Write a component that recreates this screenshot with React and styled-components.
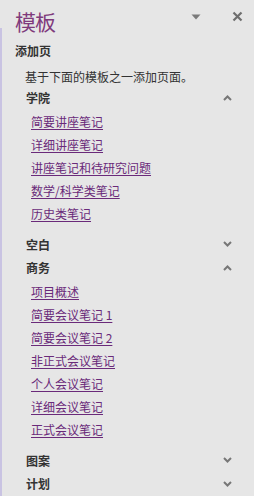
import React from 'react';
import styled, { createGlobalStyle } from 'styled-components';

const GlobalStyle = createGlobalStyle`
  html, body {
    margin: 0;
    padding: 0;
    background: #e6e6e6;
  }
  body {
    font-family: "Noto Sans CJK SC", "Noto Sans", "Liberation Sans", sans-serif;
  }
`;

const groups = [
  {
    name: '学院',
    open: true,
    items: ['简要讲座笔记', '详细讲座笔记', '讲座笔记和待研究问题', '数学/科学类笔记', '历史类笔记'],
  },
  { name: '空白', open: false, items: [] },
  {
    name: '商务',
    open: true,
    items: ['项目概述', '简要会议笔记 1', '简要会议笔记 2', '非正式会议笔记', '个人会议笔记', '详细会议笔记', '正式会议笔记'],
  },
  { name: '图案', open: false, items: [] },
  { name: '计划', open: false, items: [] },
];

const Chevron = ({ up }) => (
  <svg width="9" height="6" viewBox="0 0 9 6">
    <polyline
      points={up ? '1,5 4.5,1.5 8,5' : '1,1 4.5,4.5 8,1'}
      fill="none"
      stroke="#777"
      strokeWidth="2"
    />
  </svg>
);

const App = () => {
  return (
    <>
      <GlobalStyle />
      <Pane>
        <Header>
          <Title>模板</Title>
          <HeaderIcons>
            <svg width="10" height="6" viewBox="0 0 10 6">
              <polygon points="0.5,0.5 9.5,0.5 5,5.5" fill="#7a7a7a" />
            </svg>
            <svg width="11" height="11" viewBox="0 0 11 11">
              <path d="M1.5 1.5 L9.5 9.5 M9.5 1.5 L1.5 9.5" stroke="#6e6e6e" strokeWidth="2.2" />
            </svg>
          </HeaderIcons>
        </Header>
        <Body>
          <SectionTitle>添加页</SectionTitle>
          <Description>基于下面的模板之一添加页面。</Description>
          {groups.map((g) => (
            <Group key={g.name} open={g.open}>
              <GroupHeader>
                <span>{g.name}</span>
                <Chevron up={g.open} />
              </GroupHeader>
              {g.open && (
                <LinkList>
                  {g.items.map((item) => (
                    <LinkItem key={item}>
                      <a href="#">{item}</a>
                    </LinkItem>
                  ))}
                </LinkList>
              )}
            </Group>
          ))}
        </Body>
      </Pane>
    </>
  );
};

export default App;

const Pane = styled.div`
  width: 254px;
  height: 496px;
  box-sizing: border-box;
  background: #e6e6e6;
  overflow: hidden;
  display: flex;
  flex-direction: column;
`;

const Header = styled.div`
  display: flex;
  align-items: center;
  justify-content: space-between;
  height: 42px;
  padding: 0 11px 0 15px;
  flex-shrink: 0;
`;

const Title = styled.h1`
  margin: 0;
  font-size: 21px;
  font-weight: normal;
  line-height: 42px;
  color: #7f3a7c;
  letter-spacing: -1px;
`;

const HeaderIcons = styled.div`
  display: flex;
  align-items: center;
  gap: 31px;
  margin-top: -9px;
`;

const Body = styled.div`
  flex: 1;
  border-left: 2px solid #c9c3e2;
  padding: 0 0 0 13px;
  margin-top: -14px;
  padding-top: 14px;
`;

const SectionTitle = styled.div`
  font-size: 12px;
  font-weight: bold;
  line-height: 18px;
  color: #333;
`;

const Description = styled.div`
  margin-top: 8px;
  padding-left: 10px;
  font-size: 12px;
  line-height: 18px;
  color: #333;
`;

const Group = styled.div`
  padding-bottom: ${(props) => (props.open ? '8px' : '0')};
  &:first-of-type {
    margin-top: 6px;
  }
`;

const GroupHeader = styled.div`
  display: flex;
  align-items: center;
  justify-content: space-between;
  height: 23.5px;
  padding: 0 22px 0 11px;
  font-size: 12px;
  font-weight: bold;
  color: #333;
`;

const LinkList = styled.ul`
  list-style: none;
  margin: 0;
  padding: 0 0 0 16px;
`;

const LinkItem = styled.li`
  height: 23px;
  line-height: 23px;
  font-size: 12px;

  a {
    color: #6a2a7a;
    text-decoration: underline;
    text-underline-offset: 2px;
  }
`;
